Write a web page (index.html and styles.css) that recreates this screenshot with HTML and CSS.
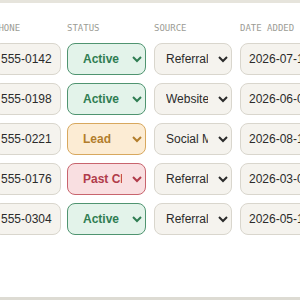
FILE: index.html
```html
<!DOCTYPE html>
<html lang="en">
<head>
    <meta charset="UTF-8">
    <meta name="viewport" content="width=device-width, initial-scale=1.0">
    <title>Contacts</title>
    <link rel="stylesheet" href="styles.css">
</head>
<body>

    <div class="panel">
        <div class="table-scroll">
            <table class="contacts">
                <thead>
                    <tr>
                        <th class="col-phone">Phone</th>
                        <th>Status</th>
                        <th>Source</th>
                        <th>Date added</th>
                    </tr>
                </thead>
                <tbody>
                    <tr>
                        <td class="col-phone"><input class="field phone" type="text" value="555-0142"></td>
                        <td>
                            <select class="status active">
                                <option selected>Active</option>
                                <option>Lead</option>
                                <option>Past Client</option>
                            </select>
                        </td>
                        <td>
                            <select class="field source">
                                <option selected>Referral</option>
                                <option>Website</option>
                                <option>Social Media</option>
                            </select>
                        </td>
                        <td><input class="field date" type="text" value="2026-07-14"></td>
                    </tr>
                    <tr>
                        <td class="col-phone"><input class="field phone" type="text" value="555-0198"></td>
                        <td>
                            <select class="status active">
                                <option selected>Active</option>
                                <option>Lead</option>
                                <option>Past Client</option>
                            </select>
                        </td>
                        <td>
                            <select class="field source">
                                <option>Referral</option>
                                <option selected>Website</option>
                                <option>Social Media</option>
                            </select>
                        </td>
                        <td><input class="field date" type="text" value="2026-06-02"></td>
                    </tr>
                    <tr>
                        <td class="col-phone"><input class="field phone" type="text" value="555-0221"></td>
                        <td>
                            <select class="status lead">
                                <option>Active</option>
                                <option selected>Lead</option>
                                <option>Past Client</option>
                            </select>
                        </td>
                        <td>
                            <select class="field source">
                                <option>Referral</option>
                                <option>Website</option>
                                <option selected>Social Media</option>
                            </select>
                        </td>
                        <td><input class="field date" type="text" value="2026-08-19"></td>
                    </tr>
                    <tr>
                        <td class="col-phone"><input class="field phone" type="text" value="555-0176"></td>
                        <td>
                            <select class="status past">
                                <option>Active</option>
                                <option>Lead</option>
                                <option selected>Past Client</option>
                            </select>
                        </td>
                        <td>
                            <select class="field source">
                                <option selected>Referral</option>
                                <option>Website</option>
                                <option>Social Media</option>
                            </select>
                        </td>
                        <td><input class="field date" type="text" value="2026-03-07"></td>
                    </tr>
                    <tr>
                        <td class="col-phone"><input class="field phone" type="text" value="555-0304"></td>
                        <td>
                            <select class="status active">
                                <option selected>Active</option>
                                <option>Lead</option>
                                <option>Past Client</option>
                            </select>
                        </td>
                        <td>
                            <select class="field source">
                                <option selected>Referral</option>
                                <option>Website</option>
                                <option>Social Media</option>
                            </select>
                        </td>
                        <td><input class="field date" type="text" value="2026-05-11"></td>
                    </tr>
                </tbody>
            </table>
        </div>
    </div>

</body>
</html>
```

FILE: styles.css
```css
body {
    margin: 0;
    font-family: "Liberation Sans", Arial, sans-serif;
    background-color: #ffffff;
    color: #333;
}

.panel {
    height: 300px;
    box-sizing: border-box;
    border-top: 3px solid #e6e4dc;
    border-bottom: 3px solid #dddbd3;
    padding-top: 14px;
}

.table-scroll {
    overflow: hidden;
}

.contacts {
    border-collapse: collapse;
    margin-left: -7px; /* table is scrolled to the right */
}

.contacts th {
    padding: 5px 8px 5px 0;
    text-align: left;
    font-family: "DejaVu Sans Mono", monospace;
    font-size: 9px;
    line-height: 12px;
    font-weight: normal;
    text-transform: uppercase;
    color: #9c9c95;
    white-space: nowrap;
}

.contacts td {
    padding: 4px 8px 4px 0;
}

.contacts .col-phone {
    padding-right: 6px;
}

.field,
.status {
    box-sizing: border-box;
    height: 32px;
    border-radius: 8px;
    font-family: "Liberation Sans", Arial, sans-serif;
    font-size: 12px;
    margin: 0;
    display: block;
}

.field {
    background-color: #f5f3ee;
    border: 1px solid #d9d6cd;
    color: #2b2b2b;
    padding: 0 8px;
}

.phone {
    width: 68px;
    padding-left: 7px;
}

.date {
    width: 110px;
}

select.field {
    width: 78px;
    padding: 0 7px 0 7px;
}

.status {
    width: 79px;
    padding: 0 7px 0 11px;
    font-weight: bold;
    border: 1px solid;
}

.status.active {
    background-color: #e3f3ea;
    border-color: #4f9470;
    color: #2f7d52;
}

.status.lead {
    background-color: #fcecd4;
    border-color: #d8a85e;
    color: #b27d2c;
}

.status.past {
    background-color: #f9dfe1;
    border-color: #c8646d;
    color: #b03b4a;
}
```
